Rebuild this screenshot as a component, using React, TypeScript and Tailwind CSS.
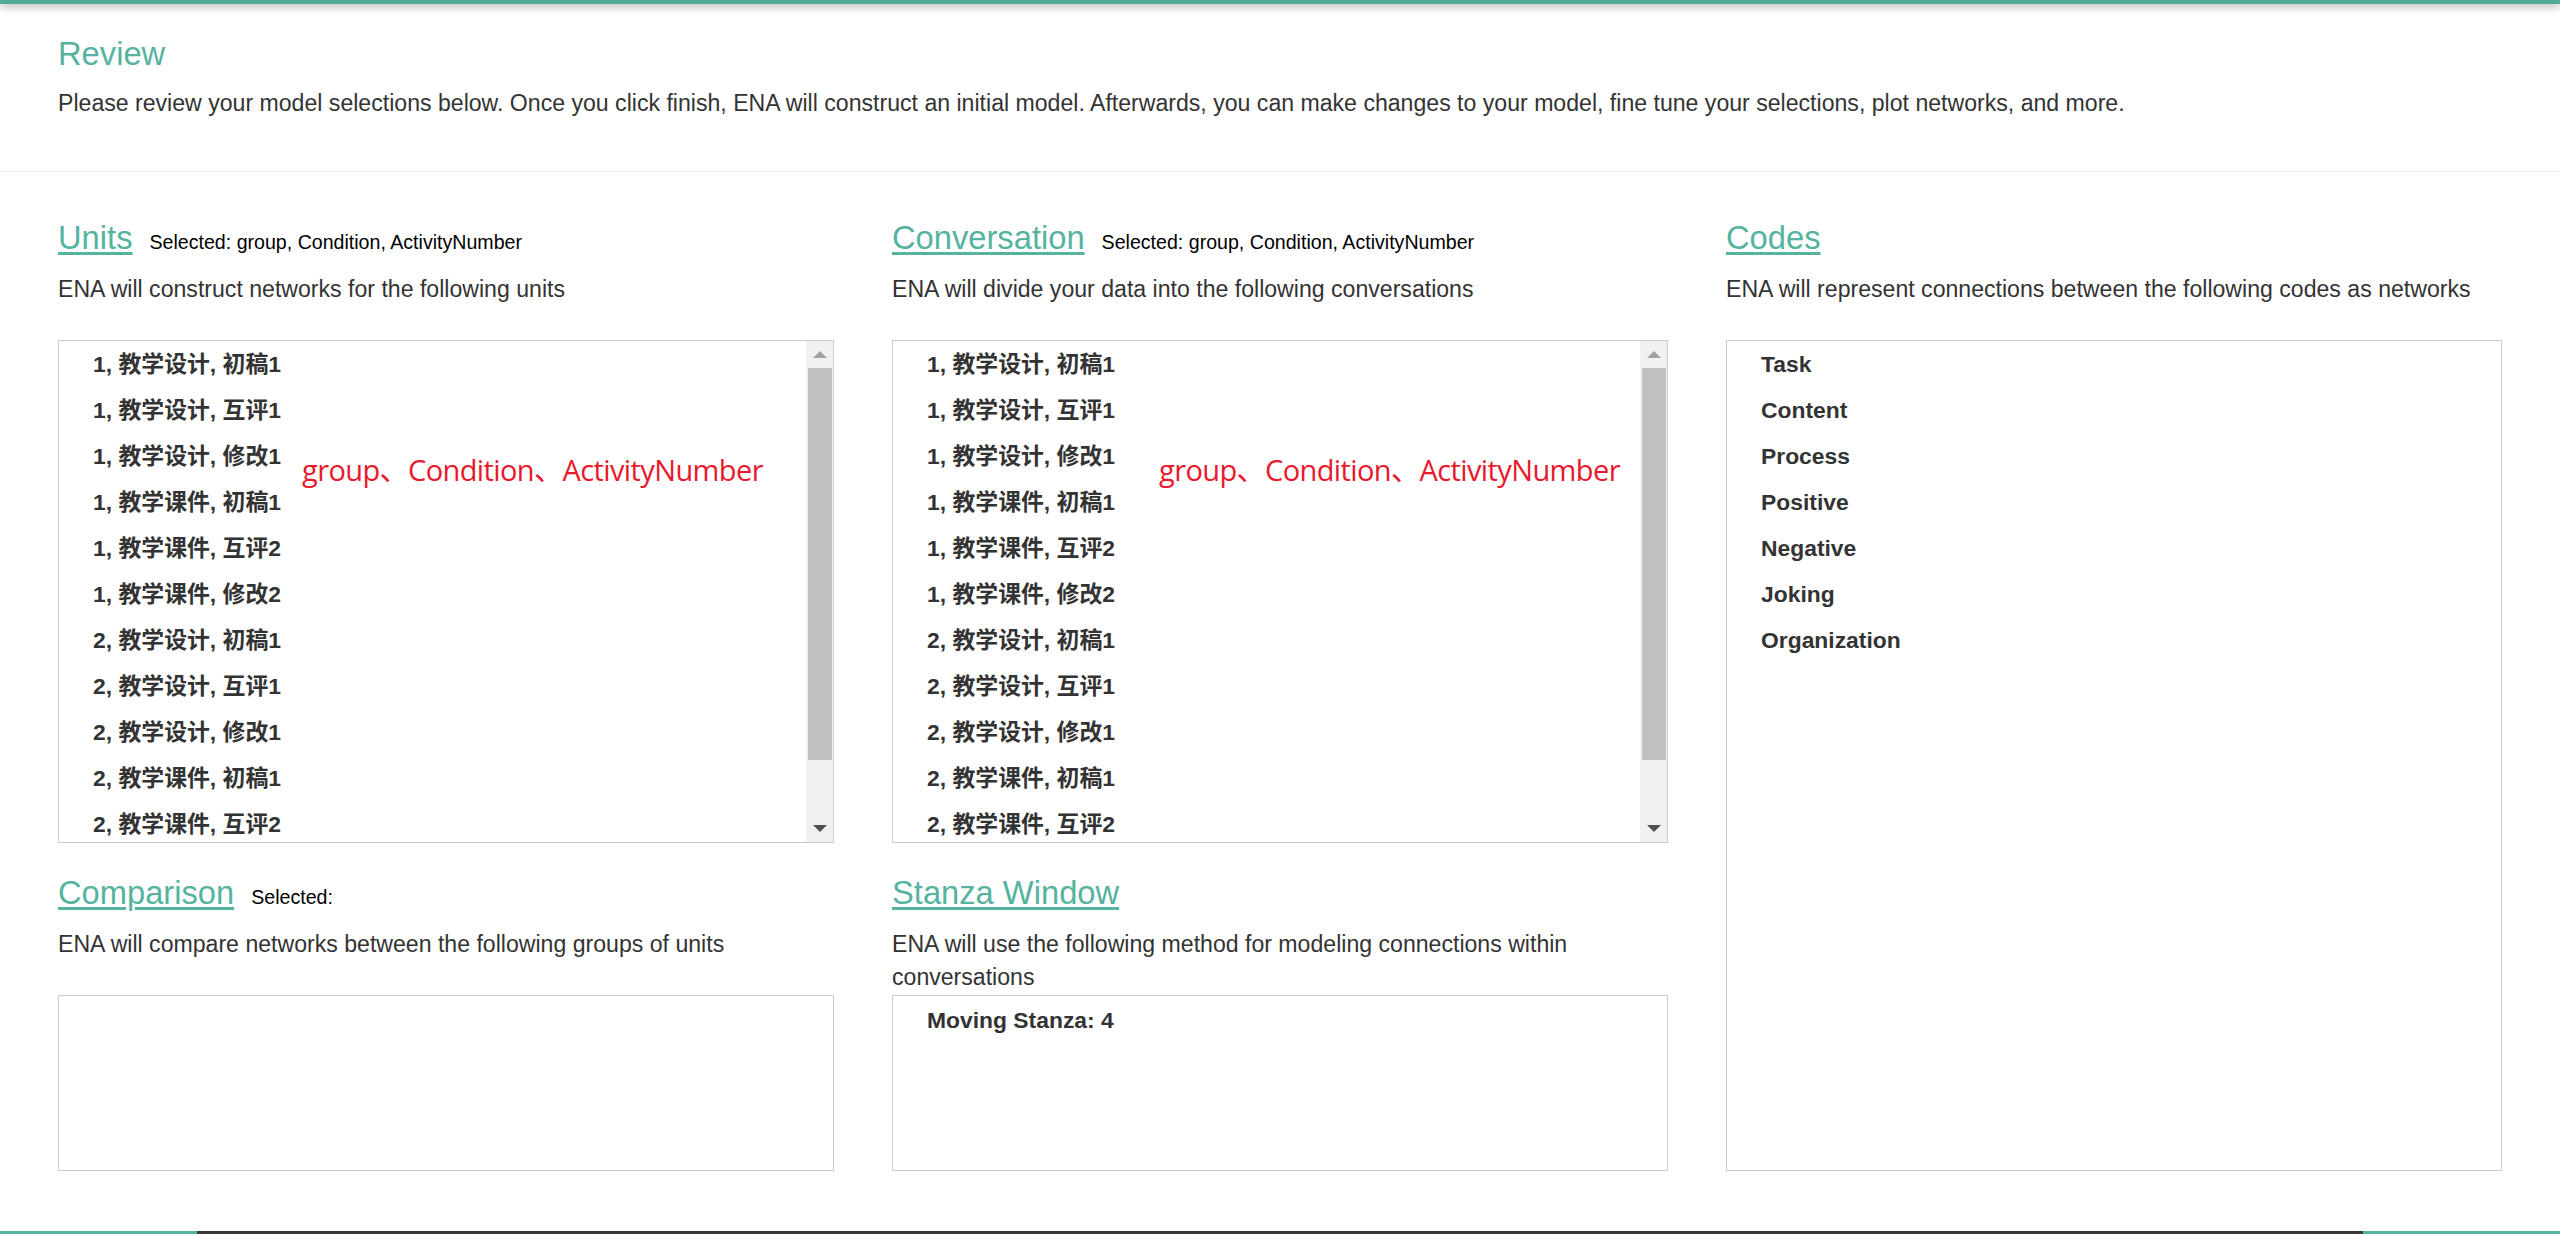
import React from "react";

const unitItems = [
  "1, 教学设计, 初稿1",
  "1, 教学设计, 互评1",
  "1, 教学设计, 修改1",
  "1, 教学课件, 初稿1",
  "1, 教学课件, 互评2",
  "1, 教学课件, 修改2",
  "2, 教学设计, 初稿1",
  "2, 教学设计, 互评1",
  "2, 教学设计, 修改1",
  "2, 教学课件, 初稿1",
  "2, 教学课件, 互评2",
];

const codes = ["Task", "Content", "Process", "Positive", "Negative", "Joking", "Organization"];

function Heading({ title, selected }: { title: string; selected?: string }) {
  return (
    <div className="flex items-baseline h-[36px]">
      <span className="text-[32.7px] leading-[36px] text-[#55b3a0] underline decoration-[3px] underline-offset-[3px] cursor-pointer">
        {title}
      </span>
      {selected !== undefined && (
        <span className="ml-[17px] text-[19.6px] text-black">Selected:{selected ? " " + selected : ""}</span>
      )}
    </div>
  );
}

function Desc({ children }: { children: React.ReactNode }) {
  return <p className="mt-[17px] h-[67px] text-[23.1px] leading-[32.67px] text-[#333]">{children}</p>;
}

function Item({ children }: { children: React.ReactNode }) {
  return (
    <div className="h-[46px] shrink-0 flex items-center pl-[34px] pt-[2px] font-bold text-[22.87px] text-[#333] whitespace-nowrap">
      {children}
    </div>
  );
}

function Scrollbar() {
  return (
    <div className="w-[27px] shrink-0 bg-[#f1f1f1] flex flex-col items-center">
      <div className="h-[27px] w-full flex items-center justify-center">
        <svg width="14" height="7" viewBox="0 0 14 7">
          <polygon points="0,7 7,0 14,7" fill="#a3a3a3" />
        </svg>
      </div>
      <div className="w-[24px] h-[392px] bg-[#c1c1c1]" />
      <div className="flex-1" />
      <div className="h-[27px] w-full flex items-center justify-center">
        <svg width="14" height="7" viewBox="0 0 14 7">
          <polygon points="0,0 14,0 7,7" fill="#505050" />
        </svg>
      </div>
    </div>
  );
}

function Annotation({ left }: { left: string }) {
  return (
    <div
      className={`absolute top-[114px] ${left} text-[29px] leading-[29px] text-[#e8192c] whitespace-nowrap font-['Open_Sans','Noto_Sans_CJK_SC',sans-serif] tracking-[-0.6px]`}
    >
      group、Condition、ActivityNumber
    </div>
  );
}

function ListBox({ annotationLeft }: { annotationLeft: string }) {
  return (
    <div className="relative h-[503px] border border-[#ccc] flex overflow-hidden">
      <div className="flex-1 overflow-hidden flex flex-col">
        {unitItems.map((t) => (
          <Item key={t}>{t}</Item>
        ))}
      </div>
      <Scrollbar />
      <Annotation left={annotationLeft} />
    </div>
  );
}

export default function App() {
  return (
    <div className="h-[1234px] flex flex-col bg-white overflow-hidden text-[#333] font-['Liberation_Sans','Noto_Sans_CJK_SC',Arial,sans-serif]">
      <div className="h-[4px] shrink-0 bg-[#52ab98] shadow-[0_2px_9px_rgba(0,0,0,0.45)] relative z-10" />
      <header className="px-[58px] pt-[31.7px]">
        <h3 className="text-[32.7px] leading-[36px] text-[#55b3a0]">Review</h3>
        <p className="mt-[15.5px] text-[23.1px] leading-[32.67px] text-[#333]">
          Please review your model selections below. Once you click finish, ENA will construct an initial model.
          Afterwards, you can make changes to your model, fine tune your selections, plot networks, and more.
        </p>
      </header>
      <div className="mt-[51.2px] h-px shrink-0 bg-[#eee]" />
      <main className="px-[58px] pt-[47.5px] grid grid-cols-3 gap-x-[58px]">
        <div className="flex flex-col">
          <Heading title="Units" selected="group, Condition, ActivityNumber" />
          <Desc>ENA will construct networks for the following units</Desc>
          <ListBox annotationLeft="left-[243px]" />
          <div className="mt-[32.4px]">
            <Heading title="Comparison" selected="" />
          </div>
          <Desc>ENA will compare networks between the following groups of units</Desc>
          <div className="h-[176px] border border-[#ccc]" />
        </div>
        <div className="flex flex-col">
          <Heading title="Conversation" selected="group, Condition, ActivityNumber" />
          <Desc>ENA will divide your data into the following conversations</Desc>
          <ListBox annotationLeft="left-[266px]" />
          <div className="mt-[32.4px]">
            <Heading title="Stanza Window" />
          </div>
          <Desc>ENA will use the following method for modeling connections within conversations</Desc>
          <div className="h-[176px] border border-[#ccc]">
            <Item>Moving Stanza: 4</Item>
          </div>
        </div>
        <div className="flex flex-col">
          <Heading title="Codes" />
          <Desc>ENA will represent connections between the following codes as networks</Desc>
          <div className="h-[831px] border border-[#ccc] flex flex-col">
            {codes.map((c) => (
              <Item key={c}>{c}</Item>
            ))}
          </div>
        </div>
      </main>
      <div className="flex-1" />
      <div className="h-[3px] shrink-0 flex">
        <div className="w-[197px] bg-[#55b3a0]" />
        <div className="flex-1 bg-[#3b3b3b]" />
        <div className="w-[197px] bg-[#55b3a0]" />
      </div>
    </div>
  );
}
